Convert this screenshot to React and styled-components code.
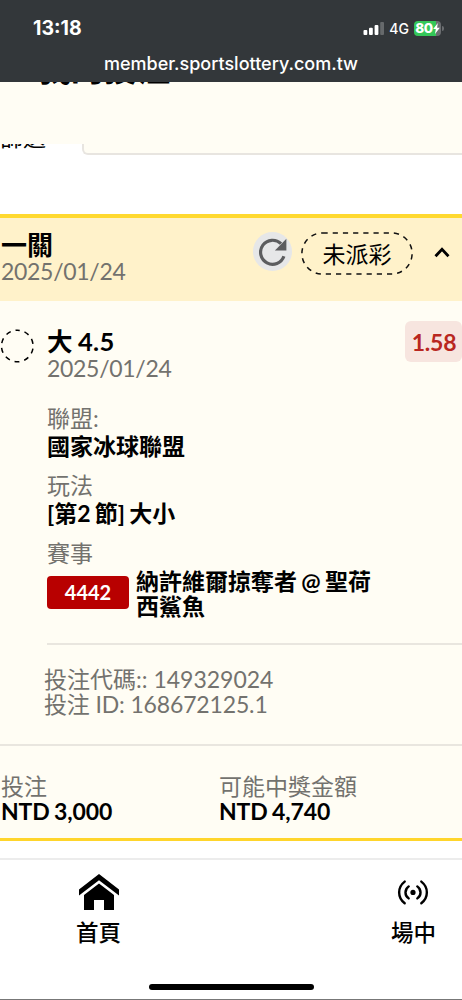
import styled, { createGlobalStyle } from 'styled-components';

const details = [
  { label: '聯盟:', value: '國家冰球聯盟' },
  { label: '玩法', value: '[第2 節] 大小' }
];

function StatusBar() {
  return (
    <StatusWrapper>
      <StatusRow>
        <Clock>13:18</Clock>
        <Indicators>
          <svg width="22" height="14" viewBox="0 0 22 14" fill="#fff">
            <rect x="0.5" y="9" width="3.8" height="5" rx="1" />
            <rect x="6" y="6.7" width="3.8" height="7.3" rx="1" />
            <rect x="11.6" y="4" width="3.8" height="10" rx="1" />
            <rect x="17.2" y="1" width="3.8" height="13" rx="1" opacity="0.25" />
          </svg>
          <Network>4G</Network>
          <Battery>
            80
            <svg width="7" height="11" viewBox="0 0 7 11" fill="#fff">
              <path d="M4.8 0 0.2 6.1h2.6L2 11l4.8-6.3H4.1z" />
            </svg>
          </Battery>
          <BatteryCap />
        </Indicators>
      </StatusRow>
      <Address>member.sportslottery.com.tw</Address>
    </StatusWrapper>
  );
}

function BetHeader() {
  return (
    <HeaderWrapper>
      <HeaderText>
        <Strong $size={26}>一關</Strong>
        <Muted $gap={1} $spacing={-0.3}>
          2025/01/24
        </Muted>
      </HeaderText>
      <RefreshButton aria-label="refresh">
        <svg width="28" height="28" viewBox="0 0 28 28">
          <path
            d="M24.9 18.2A12 12 0 1 1 22 5.7"
            fill="none"
            stroke="#5c5d5f"
            strokeWidth="3.2"
          />
          <path d="M27.4 0.8v11.6H15.9z" fill="#5c5d5f" />
        </svg>
      </RefreshButton>
      <StatusPill>
        <svg width="112" height="43" viewBox="0 0 112 43">
          <rect
            x="0.9"
            y="0.9"
            width="110.2"
            height="41.2"
            rx="20.6"
            fill="none"
            stroke="#111"
            strokeWidth="1.5"
            strokeDasharray="5.2 5"
          />
        </svg>
        <PillText>未派彩</PillText>
      </StatusPill>
      <Chevron width="16" height="11" viewBox="0 0 16 11">
        <path d="M1.5 9.3 8 2.4l6.5 6.9" fill="none" stroke="#000" strokeWidth="2.8" />
      </Chevron>
    </HeaderWrapper>
  );
}

function Selection() {
  return (
    <SelectionWrapper>
      <Marker width="34" height="34" viewBox="0 0 34 34">
        <circle
          cx="17.3"
          cy="17"
          r="15.8"
          fill="none"
          stroke="#000"
          strokeWidth="1.5"
          strokeDasharray="5 4.93"
          strokeDashoffset="2.5"
          transform="rotate(-90 17.3 17)"
        />
      </Marker>
      <SelectionBody>
        <SelectionTop>
          <div>
            <Strong $size={25.5} $spacing={0.3}>
              大 4.5
            </Strong>
            <Muted $gap={2} $spacing={-0.3}>
              2025/01/24
            </Muted>
          </div>
          <Odds>1.58</Odds>
        </SelectionTop>
        {details.map(({ label, value }) => (
          <Detail key={label}>
            <Muted>{label}</Muted>
            <Strong $gap={3}>{value}</Strong>
          </Detail>
        ))}
        <Detail>
          <Muted>賽事</Muted>
        </Detail>
        <Match>
          <MatchCode>4442</MatchCode>
          <div>
            <Strong>納許維爾掠奪者 @ 聖荷</Strong>
            <Strong>西鯊魚</Strong>
          </div>
        </Match>
        <Reference>
          <Muted>投注代碼:: 149329024</Muted>
          <Muted $spacing={-0.15}>投注 ID: 168672125.1</Muted>
        </Reference>
      </SelectionBody>
    </SelectionWrapper>
  );
}

function BottomNav() {
  return (
    <NavWrapper>
      <NavItems>
        <NavItem>
          <NavIcon>
            <svg width="40" height="36" viewBox="0 0 40 36">
              <path d="M20 0 40 15.6V21.5L20 6.2 0 21.5v-5.9z" />
              <path d="M20 9.6 35 21v15H25V26H15v10H5V21z" />
            </svg>
          </NavIcon>
          <NavLabel>首頁</NavLabel>
        </NavItem>
        <NavItem>
          <NavIcon>
            <svg
              width="32"
              height="36"
              viewBox="0 0 32 36"
              fill="none"
              stroke="#000"
              strokeWidth="2.4"
              strokeLinecap="round"
            >
              <path d="M7.7 7.6C.3 13.3.3 23.5 7.7 29.2" />
              <path d="M24.3 7.6c7.4 5.7 7.4 15.9 0 21.6" />
              <path d="M11.7 12.4c-4.3 3.1-4.3 8.9 0 12" />
              <path d="M20.3 12.4c4.3 3.1 4.3 8.9 0 12" />
              <circle cx="16" cy="18.4" r="2.6" fill="#000" stroke="none" />
            </svg>
          </NavIcon>
          <NavLabel>場中</NavLabel>
        </NavItem>
      </NavItems>
      <HomeIndicator />
    </NavWrapper>
  );
}

export default function App() {
  return (
    <>
      <GlobalStyle />
      <Page>
        <StatusBar />
        <TitleBand>
          <Title>我的投注</Title>
        </TitleBand>
        <FilterRow>
          <FilterLabel>篩選</FilterLabel>
          <FilterBox />
        </FilterRow>
        <BetCard>
          <BetHeader />
          <Selection />
          <Totals>
            <div>
              <Muted>投注</Muted>
              <Strong $spacing={-0.1}>NTD 3,000</Strong>
            </div>
            <div>
              <Muted>可能中獎金額</Muted>
              <Strong $spacing={-0.1}>NTD 4,740</Strong>
            </div>
          </Totals>
        </BetCard>
        <BottomNav />
      </Page>
    </>
  );
}

const GlobalStyle = createGlobalStyle`
  * {
    box-sizing: border-box;
  }

  body {
    margin: 0;
    background: #fff;
    color: #000;
    font-family: Lato, 'Noto Sans CJK TC', sans-serif;
  }

  svg {
    display: block;
  }
`;

const Page = styled.div`
  display: flex;
  flex-direction: column;
  width: 462px;
  height: 1000px;
  overflow: hidden;
  background: #fff;
`;

const StatusWrapper = styled.header`
  flex: none;
  height: 82px;
  padding-top: 15px;
  background: #33373a;
  color: #fff;
  font-family: Inter, sans-serif;
`;

const StatusRow = styled.div`
  display: flex;
  justify-content: space-between;
  align-items: center;
  height: 26px;
  padding: 0 18px 0 33px;
`;

const Clock = styled.span`
  font-size: 19.5px;
  font-weight: 700;
`;

const Indicators = styled.div`
  display: flex;
  align-items: center;
`;

const Network = styled.span`
  margin: 0 5px 0 4px;
  font-size: 14px;
  font-weight: 500;
`;

const Battery = styled.div`
  display: flex;
  align-items: center;
  justify-content: center;
  width: 27px;
  height: 15px;
  border-radius: 4px;
  background: linear-gradient(90deg, #34c759 80%, #6b6d70 80%);
  font-size: 13.5px;
  font-weight: 800;
  letter-spacing: -0.3px;
`;

const BatteryCap = styled.div`
  width: 2px;
  height: 5px;
  margin-left: 1px;
  border-radius: 0 2px 2px 0;
  background: #6b6d70;
`;

const Address = styled.div`
  height: 24px;
  margin-top: 9px;
  font-size: 18px;
  font-weight: 500;
  line-height: 27px;
  text-align: center;
`;

const TitleBand = styled.div`
  flex: none;
  height: 62px;
  padding-left: 38px;
  overflow: hidden;
  background: #fffdf4;
`;

const Title = styled.h1`
  height: 33px;
  margin: -30px 0 0;
  font-size: 33px;
  font-weight: 900;
  line-height: 33px;
`;

const FilterRow = styled.div`
  display: flex;
  flex: none;
  height: 70px;
  overflow: hidden;
`;

const FilterLabel = styled.div`
  width: 82px;
  height: 23px;
  margin-top: -18px;
  font-size: 23px;
  line-height: 23px;
`;

const FilterBox = styled.div`
  flex: 1;
  height: 11px;
  border: 2px solid #e8e5e0;
  border-width: 0 0 2px 2px;
  border-bottom-left-radius: 6px;
  background: #fffdf4;
`;

const BetCard = styled.section`
  flex: none;
  height: 627px;
  border-top: 4px solid #ffd92f;
  border-bottom: 3px solid #ffd52b;
  background: #fffdf4;
`;

const Strong = styled.div`
  height: 25px;
  margin-top: ${({ $gap = 0 }) => $gap}px;
  font-size: ${({ $size = 23 }) => $size}px;
  font-weight: 700;
  line-height: 25px;
  letter-spacing: ${({ $spacing = 0 }) => $spacing}px;
  word-spacing: -1.3px;
  white-space: nowrap;
`;

const Muted = styled(Strong)`
  color: #73726e;
  font-weight: 400;
  word-spacing: 0;
`;

const HeaderWrapper = styled.div`
  display: flex;
  height: 83px;
  padding: 14px 12px 0 1px;
  background: #fff2ca;
`;

const HeaderText = styled.div`
  flex: 1;
  padding-top: 1px;
`;

const RefreshButton = styled.button`
  display: flex;
  align-items: center;
  justify-content: center;
  width: 39px;
  height: 39px;
  margin-right: 9px;
  padding: 0;
  border: 0;
  border-radius: 50%;
  background: #e6e7e8;
`;

const StatusPill = styled.div`
  display: grid;
  place-items: center;
  height: 43px;

  > * {
    grid-area: 1 / 1;
  }
`;

const PillText = styled.span`
  padding-top: 2px;
  font-size: 23px;
  line-height: 25px;
`;

const Chevron = styled.svg`
  margin: 15px 0 0 21px;
`;

const SelectionWrapper = styled.div`
  display: flex;
  height: 443px;
`;

const Marker = styled.svg`
  flex: none;
  margin-top: 28px;
`;

const SelectionBody = styled.div`
  flex: 1;
  padding: 28px 0 0 13px;
`;

const SelectionTop = styled.div`
  display: flex;
  justify-content: space-between;
  height: 77px;
`;

const Odds = styled.div`
  width: 57px;
  height: 41px;
  margin-top: -8px;
  padding-left: 1px;
  border-radius: 6px;
  background: #f7e5df;
  color: #b92720;
  font-size: 23px;
  font-weight: 700;
  line-height: 43px;
  letter-spacing: -0.2px;
  text-align: center;
`;

const Detail = styled.div`
  height: 67.3px;
`;

const Match = styled.div`
  display: flex;
  align-items: center;
  height: 50px;
  margin-top: -39px;
`;

const MatchCode = styled.div`
  width: 82px;
  height: 33px;
  margin: -3px 7px 0 0;
  border-radius: 4px;
  background: #b80000;
  color: #fff;
  font-size: 20px;
  font-weight: 700;
  line-height: 33px;
  text-align: center;
`;

const Reference = styled.div`
  margin-top: 24px;
  padding-top: 22px;
  border-top: 2px solid #e9e6df;

  > div {
    margin-left: -3px;
  }
`;

const Totals = styled.div`
  display: grid;
  grid-template-columns: 218px 1fr;
  height: 94px;
  padding: 28px 0 0 1px;
  border-top: 2px solid #e9e6df;
`;

const NavWrapper = styled.nav`
  display: flex;
  flex: none;
  flex-direction: column;
  align-items: center;
  height: 142px;
  margin-top: 17px;
  border-top: 2px solid #ececec;
  border-bottom: 1px solid #777;
`;

const NavItems = styled.div`
  display: flex;
  justify-content: space-between;
  width: 100%;
  height: 124px;
  padding: 14px 26px 0 76px;
`;

const NavItem = styled.div`
  display: flex;
  flex-direction: column;
  align-items: center;
`;

const NavIcon = styled.div`
  height: 46px;
`;

const NavLabel = styled.span`
  height: 25px;
  font-size: 22.5px;
  font-weight: 500;
  line-height: 25px;
`;

const HomeIndicator = styled.div`
  width: 165px;
  height: 6px;
  border-radius: 3px;
  background: #000;
`;
